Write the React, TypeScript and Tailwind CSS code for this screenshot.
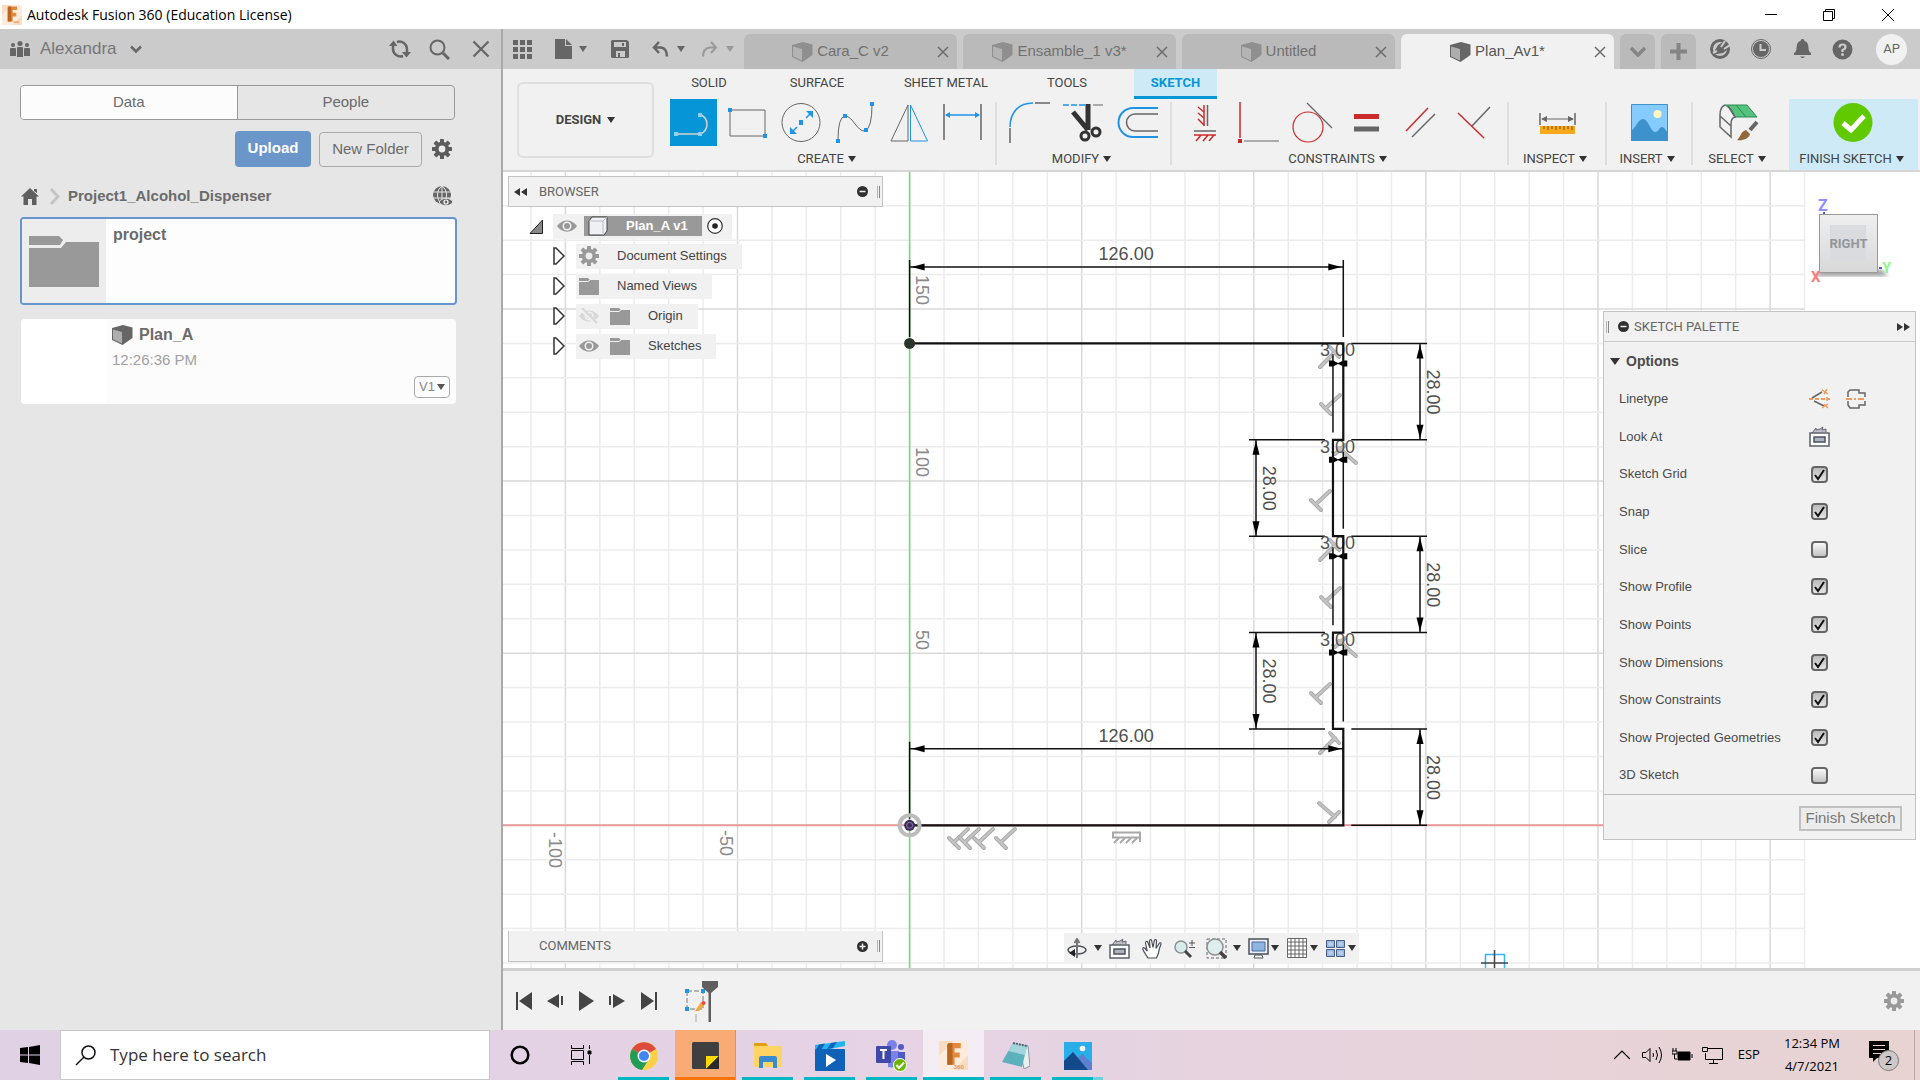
import React, { type ReactNode } from "react";

const sans = "font-['Liberation_Sans',sans-serif]";
const windows = "font-['Open_Sans',sans-serif]";

type IconProps = { className?: string };

/* ---------- shared icons ---------- */

function Caret({ className = "text-[#333]" }: IconProps) {
  return (
    <svg aria-hidden width="8" height="7" viewBox="0 0 8 7" className={className}>
      <path d="M0 0h8L4 6z" fill="currentColor" />
    </svg>
  );
}

function Cube({ className = "" }: IconProps) {
  return (
    <svg aria-hidden width="21" height="20" viewBox="0 0 21 20" className={className}>
      <path d="M0 3 11 0l9.500 2.500V13L10.500 20 0 15z" fill="#666" />
      <path d="M1 4.500 10 7v11.500L1 14.300z" fill="#aeaeae" />
    </svg>
  );
}

function Cross({ size = 12, className = "text-[#6c6c6c]" }: IconProps & { size?: number }) {
  return (
    <svg aria-hidden width={size} height={size} viewBox="0 0 12 12" className={className}>
      <path d="M1 1l10 10M11 1 1 11" stroke="currentColor" strokeWidth="1.500" />
    </svg>
  );
}

function Gear({ size = 20, className = "text-[#5c5c5c]" }: IconProps & { size?: number }) {
  return (
    <svg aria-hidden width={size} height={size} viewBox="0 0 20 20" className={className}>
      <g fill="currentColor">
        {[0, 45, 90, 135].map((a) => (
          <rect key={a} x="8" y="0" width="4" height="20" rx="0.500" transform={`rotate(${a} 10 10)`} />
        ))}
      </g>
      <circle cx="10" cy="10" r="5.200" fill="none" stroke="currentColor" strokeWidth="4" />
      <circle cx="10" cy="10" r="3.400" fill="#ececec" />
    </svg>
  );
}

function Eye({ off = false }: { off?: boolean }) {
  return (
    <svg aria-hidden width="20" height="16" viewBox="0 0 20 16" className={off ? "text-[#d8d8d8]" : "text-[#999]"}>
      <path d="M0 8C5 .500 15 .500 20 8 15 15.500 5 15.500 0 8z" fill="currentColor" />
      <circle cx="10" cy="8" r="4.500" fill="#f1f1f1" />
      <circle cx="10" cy="8" r="3" fill="currentColor" />
      {off && <path d="M2 1l15 14" stroke="#f1f1f1" strokeWidth="4" />}
      {off && <path d="M3 0l15 15" stroke="currentColor" strokeWidth="2" />}
    </svg>
  );
}

function SmallFolder() {
  return (
    <svg aria-hidden width="20" height="17" viewBox="0 0 20 17">
      <path d="M0 0h9l2 2h9v15H0z" fill="#999" />
      <path d="M0 3.500h9l2-1.500" stroke="#f1f1f1" fill="none" />
    </svg>
  );
}

function LookAt() {
  return (
    <svg aria-hidden width="21" height="21" viewBox="0 0 21 21">
      <path d="M3 7 7 2v2l4-1 3-2-1 3 4-1v3" fill="#b9bec6" stroke="#667" />
      <rect x="1" y="7" width="19" height="13" fill="#fff" stroke="#5a5f69" strokeWidth="1.500" />
      <rect x="5" y="11" width="11" height="5" fill="#aab4c2" stroke="#4b515c" strokeWidth="1.500" />
    </svg>
  );
}

function RoundSign({ plus = false }: { plus?: boolean }) {
  return (
    <svg aria-hidden width="11" height="11" viewBox="0 0 11 11">
      <circle cx="5.500" cy="5.500" r="5.500" fill="#2f2f2f" />
      <path d={plus ? "M2.500 5.500h6M5.500 2.500v6" : "M2.500 5.500h6"} stroke="#f1f1f1" strokeWidth="1.500" />
    </svg>
  );
}

function Grip() {
  return <span aria-hidden className="h-3 w-[3px] border-r border-l border-r-[#888] border-l-[#b5b5b5]" />;
}

/* ---------- title bar ---------- */

function FusionLogo({ size = 20, label = false }: { size?: number; label?: boolean }) {
  return (
    <svg aria-hidden width={size} height={size} viewBox="0 0 28 28">
      <rect width="28" height="28" fill="#fbdcc0" />
      <path d="M0 14 14 0h14v14L14 28H0z" fill="#fdebdb" />
      <path d="M8 4c0-1 1-2 2-2h11v5h-6v4h5v5h-5v7H8z" fill="#e08a3e" />
      <path d="M8 4c0-1 1-2 2-2h3v21H8z" fill="#b8651f" />
      {label ? (
        <text x="14" y="27" fontSize="6" fontWeight="700" fill="#e09a66" fontFamily="Liberation Sans">360</text>
      ) : (
        <rect x="16" y="23" width="8" height="2" fill="#eda76c" />
      )}
    </svg>
  );
}

function TitleBar() {
  return (
    <header className={`flex h-[29px] shrink-0 items-center bg-white pl-[2px] ${windows}`}>
      <FusionLogo />
      <h1 className="ml-[5px] flex-1 text-sm text-black">Autodesk Fusion 360 (Education License)</h1>
      <div className="flex h-full pr-[2px]">
        <button aria-label="Minimize" className="grid w-[58px] place-items-center">
          <svg width="12" height="12"><path d="M0 5.500h12" stroke="#000" /></svg>
        </button>
        <button aria-label="Restore" className="grid w-[58px] place-items-center">
          <svg width="12" height="12" fill="none" stroke="#000"><path d="M.500 2.500h9v9h-9zM2.500 2.500v-2h9v9h-2" /></svg>
        </button>
        <button aria-label="Close" className="grid w-[60px] place-items-center">
          <svg width="12" height="12"><path d="M0 0l12 12M12 0 0 12" stroke="#000" /></svg>
        </button>
      </div>
    </header>
  );
}

/* ---------- data panel ---------- */

function DataPanel() {
  return (
    <aside className="flex w-[503px] shrink-0 flex-col border-r-2 border-[#aaa] bg-[#e6e6e6] text-[15px] text-[#6b6b6b]">
      <div className="flex h-10 items-center bg-[#cbcbcb] pr-[11px] pl-[10px]">
        <svg aria-hidden width="20" height="16" viewBox="0 0 20 16" fill="#666">
          <circle cx="3" cy="4" r="2" /><circle cx="10" cy="2.500" r="2.500" /><circle cx="17" cy="4" r="2" />
          <path d="M0 8q0-1 1-1h4q1 0 1 1v7H0zM7 7q0-1 1-1h4q1 0 1 1v9H7zM14 8q0-1 1-1h4q1 0 1 1v7h-6z" />
        </svg>
        <button className="ml-[10px] flex items-center gap-[13px] text-[17px] text-[#777]">
          Alexandra
          <svg aria-hidden width="12" height="9" fill="none" stroke="#666" strokeWidth="2.500"><path d="M1 1.500l5 5 5-5" /></svg>
        </button>
        <div className="ml-auto flex items-center gap-[18px]">
          <button aria-label="Refresh">
            <svg width="22" height="20" viewBox="0 0 22 20" fill="none" stroke="#666" strokeWidth="2.500">
              <path d="M4 6v4a7.500 7.500 0 0 0 10 7M8 3a7.500 7.500 0 0 1 10 7v4" />
              <path d="M0 7 4.500 1.500 8.500 7zM13 13h9l-4.500 5.500z" fill="#666" stroke="none" />
            </svg>
          </button>
          <button aria-label="Search">
            <svg width="21" height="21" viewBox="0 0 21 21" fill="none" stroke="#666">
              <circle cx="8.500" cy="8.500" r="7" strokeWidth="2" /><path d="M14 14l6 6" strokeWidth="3" />
            </svg>
          </button>
          <button aria-label="Close panel" className="ml-1"><Cross size={18} className="text-[#666]" /></button>
        </div>
      </div>

      <div className="mt-4 mr-[46px] ml-5 grid h-[35px] grid-cols-2 overflow-hidden rounded border border-[#999]">
        <button className="border-r border-[#999] bg-[#fcfcfc]">Data</button>
        <button>People</button>
      </div>

      <div className="mt-[11px] mr-[49px] flex h-9 items-center justify-end gap-2">
        <button className="h-9 w-[76px] rounded bg-[#6a96c9] pb-px font-bold text-white">Upload</button>
        <button className="h-[35px] w-[103px] rounded border border-[#aaa]">New Folder</button>
        <button aria-label="Settings" className="ml-[2px]"><Gear /></button>
      </div>

      <nav className="mt-[17px] mr-12 ml-[21px] flex h-6 items-center">
        <a href="#home" aria-label="Home">
          <svg width="18" height="17" viewBox="0 0 18 17" fill="#5f5f5f">
            <path d="M9 0 18 8.500h-2.500V17H11v-6H7v6H2.500V8.500H0zM13 1h3v4l-3-2z" />
          </svg>
        </a>
        <svg aria-hidden className="ml-[10px]" width="11" height="17" fill="none" stroke="#c4c4c4" strokeWidth="3"><path d="M2 1l7 7.500L2 16" /></svg>
        <a href="#project1" className="ml-2 font-bold">Project1_Alcohol_Dispenser</a>
        <button aria-label="Public link" className="ml-auto">
          <svg width="21" height="20" viewBox="0 0 21 20" fill="none">
            <circle cx="10" cy="9" r="9" fill="#666" />
            <path d="M1 6h18M1 12h18M10 0v18M10 0C4 4 4 14 10 18M10 0c6 4 6 14 0 18" stroke="#e6e6e6" />
            <path d="M7 16c3-5 11-5 14 0-3 5-11 5-14 0z" fill="#666" stroke="#e6e6e6" />
            <circle cx="14" cy="16" r="2" stroke="#fff" strokeWidth="1.200" />
          </svg>
        </button>
      </nav>

      <div className="mt-[9px] mr-11 ml-5 flex h-[88px] overflow-hidden rounded border-2 border-[#6795cf] bg-[#fdfdfd]">
        <div className="grid w-[84px] place-items-center bg-[#ededed]">
          <svg aria-hidden width="70" height="52" viewBox="0 0 70 52" fill="#999">
            <path d="M0 1h30l4 4-3 5H0zM0 13h32l5-6h33v45H0z" />
          </svg>
        </div>
        <h2 className="mt-1 ml-[7px] text-base font-bold">project</h2>
      </div>

      <div className="mt-[14px] mr-[45px] ml-[21px] flex h-[85px] rounded bg-[#fcfcfc]">
        <div className="w-[85px] rounded-l bg-white" />
        <div className="mt-1 ml-[6px] flex-1">
          <h2 className="flex items-center gap-[6px] text-base font-bold"><Cube />Plan_A</h2>
          <p className="mt-[2px] text-[#a0a0a0]">12:26:36 PM</p>
        </div>
        <button className="mr-[6px] mb-[6px] flex h-[22px] w-9 items-center justify-center gap-[2px] self-end rounded-sm border border-[#aaa] text-[13px] text-[#888]">
          V1 <Caret className="text-[#555]" />
        </button>
      </div>
    </aside>
  );
}

/* ---------- document tabs ---------- */

const tabs = [
  { name: "Cara_C v2", active: false },
  { name: "Ensamble_1 v3*", active: false },
  { name: "Untitled", active: false },
  { name: "Plan_Av1*", active: true },
];

function TabBar() {
  return (
    <div className="flex h-10 shrink-0 items-center bg-[#cbcbcb] pr-[13px]">
      <div className="flex w-[241px] shrink-0 items-center pl-[10px]">
        <button aria-label="Data panel">
          <svg width="19" height="19" fill="#666">
            {[0, 7, 14].map((y) => [0, 7, 14].map((x) => <rect key={`${x}-${y}`} x={x} y={y} width="5" height="5" />))}
          </svg>
        </button>
        <button aria-label="File" className="ml-[23px] flex items-center gap-[7px]">
          <svg width="17" height="20" fill="#666"><path d="M0 0h10v7h7v13H0zM11 0l6 6h-6z" /></svg>
          <Caret className="text-[#666]" />
        </button>
        <button aria-label="Save" className="ml-6">
          <svg width="18" height="18" viewBox="0 0 18 18"><path d="M0 1l1-1h15l2 2v15l-1 1H1l-1-1z" fill="#666" /><path d="M3 2h12v5H3zM5 11h9v6H5z" fill="#cbcbcb" /><path d="M11 3h2v3h-2zM7 13h2v4H7z" fill="#666" /></svg>
        </button>
        <button aria-label="Undo" className="ml-[23px] flex items-center gap-2">
          <svg width="17" height="17" fill="none" stroke="#666" strokeWidth="2.500"><path d="M7 1 2 6.500 7 12M2 6.500h7q6 1 6 9" /></svg>
          <Caret className="text-[#666]" />
        </button>
        <button aria-label="Redo" className="ml-4 flex items-center gap-2">
          <svg width="17" height="17" fill="none" stroke="#999" strokeWidth="2"><path d="M10 1l5 5.500-5 5.500M15 6.500H9q-7 1-7 9" /></svg>
          <Caret className="text-[#999]" />
        </button>
      </div>
      <div className="flex flex-1 gap-[6px] self-end">
        {tabs.map((t) => (
          <div
            key={t.name}
            className={`flex h-[35px] flex-1 items-center rounded-t-md pr-2 ${t.active ? "bg-[#f1f1f1] text-[#555]" : "bg-[#bababa] text-[#717171]"}`}
          >
            <button className="flex flex-1 items-center justify-center gap-1 text-[15px]">
              <Cube className={t.active ? "" : "opacity-50"} />
              {t.name}
            </button>
            <button aria-label={`Close ${t.name}`}><Cross /></button>
          </div>
        ))}
        <button aria-label="All tabs" className="grid h-[35px] w-[35px] place-items-center rounded-t-md bg-[#bababa]">
          <svg width="16" height="11" fill="none" stroke="#858585" strokeWidth="3.500"><path d="M1 2l7 7 7-7" /></svg>
        </button>
        <button aria-label="New tab" className="grid h-[35px] w-[35px] place-items-center rounded-t-md bg-[#bababa]">
          <svg width="17" height="17" stroke="#858585" strokeWidth="4"><path d="M0 8.500h17M8.500 0v17" /></svg>
        </button>
      </div>
      <div className="ml-[14px] flex items-center gap-[21px]">
        <button aria-label="Extensions">
          <svg width="20" height="20" viewBox="0 0 20 20">
            <circle cx="10" cy="10" r="8.500" fill="none" stroke="#666" strokeWidth="3" />
            <path d="M3 15 8 6l5-3 3 3 1 5-4 3-6 1z" fill="#666" />
            <path d="M11 8l4-6M14 10l6-4M3 14l4-2" stroke="#cbcbcb" strokeWidth="2" />
          </svg>
        </button>
        <button aria-label="Job status">
          <svg width="20" height="20" viewBox="0 0 20 20"><circle cx="10" cy="10" r="9.500" fill="none" stroke="#666" /><circle cx="10" cy="10" r="8" fill="#666" /><path d="M9.500 5v6H15" fill="none" stroke="#cbcbcb" strokeWidth="2" /></svg>
        </button>
        <button aria-label="Notifications" className="ml-[2px]">
          <svg width="17" height="20" viewBox="0 0 17 20" fill="#666"><path d="M8.500 0q2 0 2 2 4 1 4 7 0 4 2.500 5v2H0v-2q2.500-1 2.500-5 0-6 4-7 0-2 2-2zM6 17.500h5q-2.500 3-5 0z" /></svg>
        </button>
        <button aria-label="Help" className="mr-[3px]">
          <svg width="21" height="21" viewBox="0 0 21 21"><circle cx="10.500" cy="10.500" r="10" fill="#666" /><path d="M7.500 8.500q0-3 3-3t3 2.500q0 2-3 3v2" fill="none" stroke="#cbcbcb" strokeWidth="2.200" /><circle cx="10.500" cy="15.500" r="1.500" fill="#cbcbcb" /></svg>
        </button>
        <button className="-ml-px size-[31px] rounded-full bg-[#f1f1f1] font-['Roboto',sans-serif] text-[13px] text-[#666]">AP</button>
      </div>
    </div>
  );
}

/* ---------- ribbon ---------- */

const B = "#1f93e6";
const G = "#666";
const R = "#cc2b2b";

function Ico({ children }: { children: ReactNode }) {
  return <svg aria-hidden width="41" height="41" viewBox="0 0 41 41" fill="none">{children}</svg>;
}

const createTools: [string, ReactNode][] = [
  ["Line", <Ico><path d="M3 32h24a9 10 0 0 0 0-19.500h-1" stroke="#d9d2c9" strokeWidth="1.500" /><path d="M1 30h4v4H1zM25 30h4v4h-4zM25 11h4v4h-4z" fill="#8fd0fb" /></Ico>],
  ["Rectangle", <Ico><path d="M3 8h35v26H3z" stroke={G} /><path d="M1 6h4v4H1zM36 32h4v4h-4z" fill={B} /></Ico>],
  ["Circle", <Ico><circle cx="20" cy="20.500" r="19" stroke={G} /><path d="M18 18h4v5h-4zM32 9v7l-7-7zM9 32v-7l7 7z" fill={B} /><path d="M25 16l5-5M16 25l-5 5" stroke={B} strokeWidth="1.500" /></Ico>],
  ["Spline", <Ico><path d="M3 38Q3 15 10 14c8 0 12 16 20 15q7-3 7-26" stroke={G} /><path d="M1 37h4v4H1zM8 12h4v4H8zM29 26h4v4h-4zM35 0h4v4h-4z" fill={B} /></Ico>],
  ["Mirror", <Ico><path d="M19 3v36H2z" stroke={G} /><path d="M21.500 3v36h17z" stroke={B} /></Ico>],
  ["Dimension", <Ico><path d="M1 2v36M38 2v36" stroke={G} strokeWidth="1.500" /><path d="M3 13h33" stroke={B} strokeWidth="1.500" /><path d="M2 13l5-3v6zM37 13l-5-3v6z" fill={B} /></Ico>],
];

const modifyTools: [string, ReactNode][] = [
  ["Fillet", <Ico><path d="M1 25C1 10 10 1 24 1" stroke={B} strokeWidth="1.500" /><path d="M1 26v15M26 1h15" stroke={G} strokeWidth="1.500" /></Ico>],
  ["Trim", <Ico><path d="M0 3h22" stroke={B} strokeWidth="1.500" strokeDasharray="6 2" /><path d="M30 3h10" stroke={G} /><path d="M10 10l15 18M25 2v26" stroke="#333" strokeWidth="5" /><circle cx="22" cy="34" r="4" stroke="#333" strokeWidth="3" /><circle cx="33" cy="30" r="4" stroke="#333" strokeWidth="3" /></Ico>],
  ["Offset", <Ico><path d="M41 6H16a14 14 0 0 0 0 29h25" stroke={B} strokeWidth="2" /><path d="M41 12H18a8 8 0 0 0 0 17h23" stroke={G} strokeWidth="1.500" /></Ico>],
];

const constraintTools: [string, ReactNode][] = [
  ["Horizontal/Vertical", <Ico><path d="M20 3v21" stroke={R} strokeWidth="1.500" /><path d="M23.500 3v21M10 29h22" stroke={G} strokeWidth="1.500" /><path d="M14 5l6 5M14 11l6 5M14 17l6 6M10 33h22M17 33l-5 6M24 33l-5 6M30 33l-5 6" stroke={R} strokeWidth="1.500" /></Ico>],
  ["Coincident", <Ico><path d="M2 0v36" stroke={R} strokeWidth="1.500" /><path d="M6 39h35" stroke={G} /><path d="M0 37h4v4H0z" fill={R} /></Ico>],
  ["Tangent", <Ico><circle cx="16" cy="25" r="15" stroke={R} strokeWidth="1.200" /><path d="M15 1l25 25" stroke={G} strokeWidth="1.200" /></Ico>],
  ["Equal", <Ico><path d="M8 14.500h25" stroke={R} strokeWidth="5" /><path d="M8 27h25" stroke={G} strokeWidth="5" /></Ico>],
  ["Parallel", <Ico><path d="M6 29 28 6" stroke={R} strokeWidth="1.500" /><path d="M12 35l23-23" stroke={G} strokeWidth="1.500" /></Ico>],
  ["Perpendicular", <Ico><path d="M4 11l26 25" stroke={R} strokeWidth="1.500" /><path d="M18 24 36 5" stroke={G} strokeWidth="1.500" /></Ico>],
];

function GroupLabel({ children }: { children: string }) {
  return (
    <button className="mt-1 mr-1 flex h-[18px] items-center gap-1 whitespace-nowrap">
      {children} <Caret />
    </button>
  );
}

function ToolGroup({ label, tools, className }: { label: string; tools: [string, ReactNode][]; className: string }) {
  return (
    <section className={`flex shrink-0 flex-col items-center ${className}`}>
      <div className="flex gap-[7px]">
        {tools.map(([name, icon]) => (
          <button
            key={name}
            aria-label={name}
            className={`grid h-[47px] w-[47px] place-items-center ${name === "Line" ? "bg-[#0696d7]" : ""}`}
          >
            {icon}
          </button>
        ))}
      </div>
      <GroupLabel>{label}</GroupLabel>
    </section>
  );
}

function SingleGroup({ label, icon, className }: { label: string; icon: ReactNode; className: string }) {
  return (
    <section className={`flex shrink-0 flex-col items-center ${className}`}>
      <button aria-label={label} className="grid h-[47px] w-12 place-items-center">{icon}</button>
      <GroupLabel>{label}</GroupLabel>
    </section>
  );
}

function Divider() {
  return <span aria-hidden className="mt-[3px] h-[63px] w-0.5 shrink-0 bg-[#ddd]" />;
}

function Ribbon() {
  return (
    <div className="flex h-[103px] shrink-0 overflow-hidden border-b-2 border-[#d6d6d6] bg-[#f1f1f1] font-['Roboto',sans-serif] text-[13px] text-[#444]">
      <div className="shrink-0 py-[13px] pl-[14px]">
        <button className="flex h-[76px] w-[137px] items-center justify-center gap-[6px] rounded-md border-2 border-[#dedede] font-bold">
          DESIGN <Caret />
        </button>
      </div>
      <div className="flex flex-1 flex-col">
        <div role="tablist" className="flex h-[30px] shrink-0 items-stretch pl-4">
          <button role="tab" className="w-[78px] pb-[2px]">SOLID</button>
          <button role="tab" className="w-[138px] pb-[2px]">SURFACE</button>
          <button role="tab" className="w-[120px] pb-[2px]">SHEET METAL</button>
          <button role="tab" className="w-[122px] pb-[2px]">TOOLS</button>
          <button role="tab" aria-selected className="ml-[6px] w-[83px] border-b-[3px] border-[#0696d7] bg-[#cdeaf6] pt-px font-bold text-[#0696d7]">SKETCH</button>
        </div>
        <div className="flex flex-1">
          <ToolGroup label="CREATE" tools={createTools} className="pr-2 pl-4" />
          <Divider />
          <ToolGroup label="MODIFY" tools={modifyTools} className="px-[9px]" />
          <Divider />
          <ToolGroup label="CONSTRAINTS" tools={constraintTools} className="px-[9px]" />
          <Divider />
          <SingleGroup
            label="INSPECT"
            className="w-24"
            icon={
              <Ico>
                <path d="M3 11v12M38 11v12" stroke={G} strokeWidth="1.500" /><path d="M5 17h31" stroke={G} /><path d="M4 17l6-3v6zM37 17l-6-3v6z" fill={G} />
                <path d="M3 24h35v8H3z" fill="#f7a81b" /><path d="M7 24v3M11 24v4M15 24v3M19 24v4M23 24v3M27 24v4M31 24v3M35 24v4" stroke="#7a5200" />
              </Ico>
            }
          />
          <Divider />
          <SingleGroup
            label="INSERT"
            className="w-[84px]"
            icon={
              <Ico>
                <path d="M2 2h37v37H2z" fill="#86cbff" /><circle cx="28.500" cy="12" r="4" fill="#fdf6c4" />
                <path d="M2 29c5-3 7-12 12-12s8 13 12 13 4-5 7-5 3 4 6 5v9H2z" fill="#3e92cc" /><path d="M2.500 2.500h36v36h-36z" stroke="#3e92cc" />
              </Ico>
            }
          />
          <Divider />
          <SingleGroup
            label="SELECT"
            className="mr-1 w-[92px]"
            icon={
              <Ico>
                <path d="M6 3h22l10 12H16L13 8z" fill="#55c27d" stroke="#2d8a52" /><path d="M17 3l10 12" stroke="#2d8a52" />
                <path d="M6 3Q1 5 1 13v12l11 10V22q0-6 4-7L9 4M1 14l11 10" stroke={G} strokeWidth="1.500" />
                <path d="M38 20 31 28" stroke={G} strokeWidth="4" /><path d="M18 38c3-2 4-9 9-10l4 4c-1 5-8 7-13 6z" fill="#94683a" />
              </Ico>
            }
          />
          <SingleGroup
            label="FINISH SKETCH"
            className="mr-[2px] min-w-[129px] flex-1 bg-[#cdeaf6]"
            icon={
              <Ico>
                <circle cx="20" cy="20.500" r="19.500" fill="#61c900" /><path d="M10 21l8 7 13-14" stroke="#fff" strokeWidth="5" />
              </Ico>
            }
          />
        </div>
      </div>
    </div>
  );
}

/* ---------- sketch drawing ---------- */

const OX = 909.6;
const OY = 825.3;
const U = 3.442;
const X1 = OX + 126 * U;
const X0 = OX + 123 * U;
const level = (n: number) => OY - n * 28 * U;

const mark = {
  downLeft: "M0 0-14 13M-19 9l10 10",
  upRight: "M0 0l15-15M10-20l9 10",
  upLeft: "M0 0l-17-15M-21-9l10-9",
  downRight: "M0 0l16 14M10 19l10-10",
};

function Mark({ kind, x, y }: { kind: keyof typeof mark; x: number; y: number }) {
  return (
    <g transform={`translate(${x} ${y})`} strokeLinecap="round" fill="none">
      <path d={mark[kind]} stroke="#aaa" strokeWidth="4" />
      <path d={mark[kind]} stroke="#c4c4c4" strokeWidth="2" />
    </g>
  );
}

function Horizontal({ y }: { y: number }) {
  return (
    <g stroke="#111" strokeWidth="1.500" fill="none">
      <path d={`M${OX} ${y}H${X1}M${OX} ${y - 7}v77M${X1} ${y - 7}v77`} />
      <path d={`M${OX + 2} ${y}l13-3.500v7zM${X1 - 2} ${y}l-13-3.500v7z`} fill="#000" stroke="none" />
      <text x={OX + 189} y={y - 7} fill="#4f4f4f" stroke="none">126.00</text>
    </g>
  );
}

function Vertical({ x, n, side }: { x: number; n: number; side: "left" | "right" }) {
  const a = level(n);
  const b = level(n - 1);
  const ends = side === "right" ? [X1 + 8, x + 7] : [x - 7, X0 - 8];
  return (
    <g stroke="#111" strokeWidth="1.500" fill="none">
      <path d={`M${x} ${a}V${b}M${ends[0]} ${a}H${ends[1]}M${ends[0]} ${b}H${ends[1]}`} />
      <path d={`M${x} ${a + 1}l-3.500 14h7zM${x} ${b - 1}l-3.500-14h7z`} fill="#000" stroke="none" />
      <text transform={`translate(${x + 7} ${a + 26}) rotate(90)`} fill="#4f4f4f" stroke="none">28.00</text>
    </g>
  );
}

function Drawing() {
  const grid: ReactNode[] = [];
  for (let i = -11; i <= 26; i++) {
    const x = OX + i * 10 * U;
    grid.push(<path key={`v${i}`} d={`M${x} 172V970`} stroke={i % 5 ? "#ececec" : "#d9d9d9"} strokeWidth={1.5} />);
  }
  for (let j = -4; j <= 18; j++) {
    const y = OY - j * 10 * U;
    grid.push(<path key={`h${j}`} d={`M503 ${y}H${OX + 260 * U}`} stroke={j % 5 ? "#ececec" : "#d9d9d9"} strokeWidth={1.5} />);
  }
  return (
    <svg aria-label="Sketch" className={`absolute inset-0 h-full w-full ${sans}`} fontSize="18">
      <g transform="translate(-503 -172)">
        {grid}
        <path d={`M503 ${OY}H${OX + 260 * U}`} stroke="#e99a9a" strokeWidth="2" />
        <path d={`M${OX} 172V970`} stroke="#6fe06f" strokeWidth="1.500" />
        <g fill="#8a8a8a">
          <text transform="translate(916 275) rotate(90)">150</text>
          <text transform="translate(916 447) rotate(90)">100</text>
          <text transform="translate(916 630) rotate(90)">50</text>
          <text transform="translate(549 832) rotate(90)">-100</text>
          <text transform="translate(720 830) rotate(90)">-50</text>
        </g>
        <Mark kind="upRight" x={1320} y={367} />
        <Mark kind="upRight" x={1320} y={560} />
        <Mark kind="upRight" x={1320} y={753} />
        <Mark kind="upLeft" x={1356} y={463} />
        <Mark kind="upLeft" x={1356} y={656} />
        <Mark kind="downRight" x={1319} y={803} />
        <Mark kind="downLeft" x={1340} y={395} />
        <Mark kind="downLeft" x={1330} y={491} />
        <Mark kind="downLeft" x={1340} y={588} />
        <Mark kind="downLeft" x={1330} y={684} />
        {[968, 979, 993, 1015].map((x) => <Mark key={x} kind="downLeft" x={x} y={829} />)}
        <g stroke="#a8a8a8" fill="none">
          <path d="M1113 832.500h27v5h-27z" strokeWidth="2" />
          <path d="M1119 838l-5 5M1125 838l-5 5M1131 838l-5 5M1137 838l-5 5M1140 838v4" strokeWidth="2" />
        </g>
        <Horizontal y={267} />
        <Horizontal y={748.7} />
        <Vertical x={1420} n={5} side="right" />
        <Vertical x={1420} n={3} side="right" />
        <Vertical x={1420} n={1} side="right" />
        <Vertical x={1256} n={4} side="left" />
        <Vertical x={1256} n={2} side="left" />
        {[5, 4, 3, 2].map((n) => {
          const y = level(n);
          return (
            <g key={n}>
              <path d={`M${n % 2 ? X0 : X1} ${y + 12}v77M${X0} ${y + 20}H${X1}`} stroke="#111" strokeWidth="1.500" />
              <path d={`M${X0 - 4} ${y + 17}v6h4l4-2v-2l-4-2zM${X1 + 4} ${y + 17}v6h-4l-4-2v-2l4-2z`} fill="#000" />
              <text x="1320" y={y + 13} fill="#555">3.00</text>
            </g>
          );
        })}
        <path
          d={`M${OX} ${level(5)}H${X1}V${level(4)}H${X0}V${level(3)}H${X1}V${level(2)}H${X0}V${level(1)}H${X1}V${OY}H${OX}`}
          fill="none" stroke="#111" strokeWidth="2.200"
        />
        <circle cx={OX} cy={level(5)} r="5.500" fill="#2b352b" />
        <circle cx={OX} cy={OY} r="10" fill="none" stroke="#bcbcbc" strokeWidth="4" />
        <circle cx={OX} cy={OY} r="5.500" fill="#3d2d55" />
        <circle cx={OX} cy={OY} r="3" fill="none" stroke="#8e75bb" />
        <path d="M1485.500 972v-17.500h19V972" fill="none" stroke="#35b5f5" strokeWidth="1.500" />
        <path d="M1481 963h27M1494.500 950v22" stroke="#444" strokeWidth="1.500" />
      </g>
    </svg>
  );
}

/* ---------- browser ---------- */

type Node = { name: string; eye?: "on" | "off"; icon: "gear" | "folder" };
const nodes: Node[] = [
  { name: "Document Settings", icon: "gear" },
  { name: "Named Views", icon: "folder" },
  { name: "Origin", icon: "folder", eye: "off" },
  { name: "Sketches", icon: "folder", eye: "on" },
];

function Browser() {
  return (
    <section className="absolute top-1 left-[5px] w-[375px] text-[13px] text-[#444]">
      <div className="flex h-[31px] items-center border border-[#c4c4c4] bg-[#f1f1f1] pr-[2px] pl-[5px] font-['Roboto',sans-serif] text-[#666]">
        <button aria-label="Collapse browser">
          <svg width="13" height="8" fill="#333"><path d="M6 0v8L0 4zM13 0v8L7 4z" /></svg>
        </button>
        <h2 className="ml-[12px] flex-1">BROWSER</h2>
        <button aria-label="Hide browser" className="mr-[9px]"><RoundSign /></button>
        <Grip />
      </div>
      <ul className="mt-1">
        <li className="flex h-[30px] items-center pl-[21px]">
          <svg aria-hidden width="14" height="15"><path d="M13.500 1v13.500H1z" fill="#888" stroke="#222" /></svg>
          <div className="ml-[10px] flex h-[25px] items-center bg-[#f1f1f1] pr-[9px] pl-1">
            <Eye />
            <button className="ml-[7px] flex h-5 w-[118px] items-center gap-[18px] bg-[#999] pl-1 font-bold text-white">
              <svg aria-hidden width="20" height="20" viewBox="0 0 20 20"><path d="M1 5l3-4h15v14l-3 4H1z" fill="#eef0f4" stroke="#444" /><path d="M1 5h14v14M15 5l4-4" stroke="#b9bcc5" fill="none" /></svg>
              <span>Plan_A v1</span>
            </button>
            <svg aria-label="Active component" className="ml-[5px]" width="16" height="16"><circle cx="8" cy="8" r="7.300" fill="#fff" stroke="#333" strokeWidth="1.200" /><circle cx="8" cy="8" r="2.800" fill="#222" /></svg>
          </div>
        </li>
        {nodes.map((n) => (
          <li key={n.name} className="flex h-[30px] items-center pl-[45px]">
            <button aria-label={`Expand ${n.name}`}>
              <svg width="12" height="18"><path d="M1 1l2 0 8 8-8 8H1z" fill="#fff" stroke="#333" strokeWidth="1.500" /></svg>
            </button>
            <div className="ml-[11px] flex h-[25px] items-center bg-[#f1f1f1] pr-[15px] pl-[3px]">
              {n.eye && <span className="mr-[11px]"><Eye off={n.eye === "off"} /></span>}
              {n.icon === "gear" ? <Gear className="text-[#999]" /> : <SmallFolder />}
              <span className="ml-[18px]">{n.name}</span>
            </div>
          </li>
        ))}
      </ul>
    </section>
  );
}

function ViewCube() {
  return (
    <div className="absolute top-6 right-6 h-[92px] w-[90px]">
      <svg aria-label="View cube" width="90" height="92" viewBox="0 0 90 92" fontFamily="Roboto" fontWeight="700">
        <defs>
          <linearGradient id="face" x1="0" y1="0" x2="0" y2="1"><stop offset="0" stopColor="#efefef" /><stop offset="1" stopColor="#d8d8d8" /></linearGradient>
          <filter id="soft"><feGaussianBlur stdDeviation="2" /></filter>
        </defs>
        <path d="M8 80l8-6h60l6 6z" fill="#999" filter="url(#soft)" />
        <rect x="13.500" y="18.500" width="58" height="58" fill="url(#face)" stroke="#999" />
        <rect x="24" y="29" width="36" height="37" fill="#d9dbde" />
        <text x="42.500" y="52" fontSize="13" textAnchor="middle" fill="#92969b">RIGHT</text>
        <text x="12" y="15" fontSize="16" fill="#8f8fff">Z</text>
        <text x="5" y="86" fontSize="15" fill="#f37d7d">X</text>
        <text x="76" y="77" fontSize="15" fill="#8df58d">Y</text>
        <path d="M18 16v2M73 72h3" stroke="#55d" strokeWidth="2" />
      </svg>
    </div>
  );
}

/* ---------- sketch palette ---------- */

const options = [
  ["Sketch Grid", true],
  ["Snap", true],
  ["Slice", false],
  ["Show Profile", true],
  ["Show Points", true],
  ["Show Dimensions", true],
  ["Show Constraints", true],
  ["Show Projected Geometries", true],
  ["3D Sketch", false],
] as const;

function Palette() {
  return (
    <section className="absolute top-[139px] right-1 w-[313px] border border-[#c4c4c4] bg-[#f1f1f1] text-[13px] text-[#4b4b4b]">
      <div className="flex h-[30px] items-center border-b border-[#c8c8c8] pr-[5px] pl-[2px] font-['Roboto',sans-serif] text-[#666]">
        <Grip />
        <button aria-label="Hide palette" className="ml-[9px]"><RoundSign /></button>
        <h2 className="ml-[5px] flex-1">SKETCH PALETTE</h2>
        <button aria-label="Collapse palette">
          <svg width="13" height="8" fill="#333"><path d="M0 0l6 4-6 4zM7 0l6 4-6 4z" /></svg>
        </button>
      </div>
      <button className="mt-[9px] flex h-5 items-center gap-[6px] pl-[6px] text-sm font-bold">
        <svg aria-hidden width="10" height="7" fill="#333"><path d="M0 0h10L5 7z" /></svg>
        Options
      </button>
      <div className="mt-[9px] grid h-[414px] auto-rows-fr items-center pl-[15px]">
        <div className="flex items-center">
          <span className="w-[190px]">Linetype</span>
          <button aria-label="Construction">
            <svg width="21" height="20" viewBox="0 0 21 20" fill="none"><path d="M13 3 3 9M5 12l10 5" stroke={G} strokeWidth="1.500" /><path d="M0 10h21" stroke="#ee7d33" strokeWidth="1.500" strokeDasharray="4 2" /><path d="M13 1l6 4M18 0l-3 5M18 8v4M13 19l6-4M15 15l4 4" stroke="#ee9a60" strokeWidth="1.500" /></svg>
          </button>
          <button aria-label="Centerline" className="ml-4">
            <svg width="20" height="20" viewBox="0 0 20 20" fill="none"><path d="M2 8V3l2-2h9v3h6v4M2 12v4l2 3h9v-3h6v-4" stroke={G} strokeWidth="1.500" /><path d="M0 10h20" stroke="#ee7d33" strokeWidth="1.500" strokeDasharray="6 2 2 2" /></svg>
          </button>
        </div>
        <div className="flex items-center">
          <span className="w-[190px]">Look At</span>
          <button aria-label="Look At"><LookAt /></button>
        </div>
        {options.map(([name, on]) => (
          <label key={name} className="flex items-center">
            <span className="w-48">{name}</span>
            <span className="grid">
              <input
                type="checkbox"
                defaultChecked={on}
                className="peer col-start-1 row-start-1 size-[17px] appearance-none rounded border-2 border-[#666] bg-linear-to-b from-[#f8f8f8] to-[#c4c4c4] checked:from-[#bbb] checked:to-[#e4e4e4]"
              />
              <svg aria-hidden width="17" height="17" className="pointer-events-none invisible col-start-1 row-start-1 peer-checked:visible" fill="none" stroke="#111" strokeWidth="2"><path d="M4 9l3 4 6-9" /></svg>
            </span>
          </label>
        ))}
      </div>
      <div className="flex h-[45px] items-center justify-end border-t border-[#bbb] pt-[2px] pr-[13px]">
        <button className="h-[25px] w-[103px] border-2 border-[#c0c0c0] bg-[#ececec] text-[15px] leading-5 whitespace-nowrap text-[#777]">Finish Sketch</button>
      </div>
    </section>
  );
}

function Comments() {
  return (
    <section className="absolute bottom-[6px] left-[5px] flex h-[31px] w-[375px] items-center border border-t-0 border-[#c4c4c4] bg-[#f1f1f1] pr-[2px] pl-[30px] font-['Roboto',sans-serif] text-[13px] text-[#666]">
      <h2 className="flex-1">COMMENTS</h2>
      <button aria-label="Show comments" className="mr-[9px]"><RoundSign plus /></button>
      <Grip />
    </section>
  );
}

/* ---------- navigation bar ---------- */

function NavBar() {
  const dark = "#4a505a";
  return (
    <div className="absolute inset-x-0 bottom-[5px] flex justify-center">
      <div className="flex h-[30px] items-center bg-[#f1f1f1] px-[3px]">
        <button aria-label="Orbit" className="flex items-center gap-[7px]">
          <svg width="20" height="21" viewBox="0 0 20 21" fill="none"><ellipse cx="10" cy="12" rx="9" ry="4" stroke={dark} strokeWidth="1.500" /><path d="M10 2v18M7.500 5 10 1l2.500 4" stroke="#777" strokeWidth="2" /><path d="M2 15l6-4v8z" fill="#222" /></svg>
          <Caret />
        </button>
        <button aria-label="Look At" className="ml-[7px]"><LookAt /></button>
        <button aria-label="Pan" className="ml-3">
          <svg width="20" height="21" viewBox="0 0 20 21" fill="#fff" stroke={dark} strokeWidth="1.200"><path d="M6 20Q2 14 .700 11q0-2 2-1l2.500 3L3.500 5q0-2 2-1.500L8 10 7.500 3q.500-2 2-1L11 9.500 12.500 2q1.500-1 2 .500L14 10.500 17.500 5q2-.500 1.500 1-2 5-2.500 9l-2 5z" /></svg>
        </button>
        <button aria-label="Zoom" className="ml-3">
          <svg width="21" height="21" viewBox="0 0 21 21" fill="none"><circle cx="7" cy="9" r="6" fill="#d9ecec" stroke="#8a8f98" strokeWidth="1.500" /><path d="M11 13l6 6" stroke="#444" strokeWidth="3" /><path d="M15 5h6M18 2v6M15 9.500h6" stroke="#555" /></svg>
        </button>
        <button aria-label="Fit" className="ml-[11px] flex items-center gap-[6px]">
          <svg width="21" height="21" viewBox="0 0 21 21" fill="none"><path d="M1 1h19v19H1z" stroke="#666" strokeDasharray="3 2" /><circle cx="9" cy="9" r="8" fill="#dfeeed" stroke="#8a8f98" strokeWidth="1.500" /><path d="M14 14l6 6" stroke="#444" strokeWidth="3.500" /></svg>
          <Caret />
        </button>
        <button aria-label="Display settings" className="ml-[7px] flex items-center gap-[2px]">
          <svg width="21" height="21" viewBox="0 0 21 21"><path d="M1 1h19v15H1z" fill="#eef" stroke={dark} strokeWidth="1.500" /><path d="M4 4h13v9H4z" fill="#8fb4e0" stroke="#4b6b98" /><path d="M7 17h7l1 3H6z" fill="#fff" stroke={dark} /></svg>
          <Caret />
        </button>
        <button aria-label="Grid and snaps" className="ml-2 flex items-center gap-[3px]">
          <svg width="20" height="20" viewBox="0 0 20 20" fill="#fff" stroke="#666"><path d="M.500.500h19v19H.500zM4 0v20M8 0v20M12 0v20M16 0v20M0 4h20M0 8h20M0 12h20M0 16h20" /></svg>
          <Caret />
        </button>
        <button aria-label="Viewports" className="ml-2 flex items-center gap-[3px]">
          <svg width="19" height="17" viewBox="0 0 19 17" fill="#9db9e0" stroke="#4b6085"><path d="M.500.500h8v7h-8zM10.500.500h8v7h-8zM.500 9.500h8v7h-8zM10.500 9.500h8v7h-8z" /><path d="M3 3h3v2H3zM13 3h3v2h-3zM3 12h3v2H3zM13 12h3v2h-3z" stroke="#c9d9f0" /></svg>
          <Caret />
        </button>
      </div>
    </div>
  );
}

/* ---------- timeline ---------- */

function Timeline() {
  return (
    <footer className="flex h-[62px] shrink-0 items-center border-t-[3px] border-[#cfcfcf] bg-[#f1f1f1] pr-4 pl-[13px]">
      <div className="flex items-center gap-[15px] text-[#444]">
        <button aria-label="Go to start"><svg width="16" height="18" fill="currentColor"><path d="M0 0h2v18H0zM16 0v18L3 9z" /></svg></button>
        <button aria-label="Step back"><svg width="17" height="18" fill="currentColor"><path d="M12 2v14L0 9zM14 4h2v9h-2z" /></svg></button>
        <button aria-label="Play"><svg width="15" height="20" fill="currentColor"><path d="M0 0l15 10L0 20z" /></svg></button>
        <button aria-label="Step forward"><svg width="17" height="18" fill="currentColor"><path d="M4 2v14l12-7zM0 4h2v9H0z" /></svg></button>
        <button aria-label="Go to end"><svg width="16" height="18" fill="currentColor"><path d="M14 0h2v18h-2zM0 0v18l13-9z" /></svg></button>
      </div>
      <button aria-label="Sketch feature" className="ml-7">
        <svg width="34" height="42" viewBox="0 0 34 42" fill="none">
          <path d="M2 11h16v18H2z" stroke="#777" strokeDasharray="5 2" />
          <path d="M0 9h4v4H0zM16 9h4v4h-4zM0 27h4v4H0z" fill={B} />
          <path d="M10 31l6-9 4 2-6 7z" fill="#f0a93a" /><circle cx="18.500" cy="23" r="2" fill="#ec4b4b" />
          <path d="M11 34v8" stroke="#ccc" strokeWidth="2" />
          <path d="M17 1h16v6l-7 6v29h-2.500V13L17 7z" fill="#5f5f5f" />
        </svg>
      </button>
      <button aria-label="Timeline settings" className="ml-auto"><Gear className="text-[#999]" /></button>
    </footer>
  );
}

/* ---------- taskbar ---------- */

const apps: { name: string; tile?: string; bar: string; icon: ReactNode }[] = [
  {
    name: "Chrome", bar: "w-[51px] bg-[#00b7c3]",
    icon: <svg width="28" height="30" viewBox="0 0 28 28"><circle cx="14" cy="14" r="14" fill="#fdd04a" /><path d="M14 14 2 7A14 14 0 0 1 26 7z" fill="#dd4b3e" /><path d="M14 14 2 7a14 14 0 0 0 10 21l7-11z" fill="#1f9d57" /><circle cx="14" cy="14" r="6.500" fill="#fff" /><circle cx="14" cy="14" r="5" fill="#4285f4" /></svg>,
  },
  {
    name: "Sticky Notes", tile: "bg-[#f9ab76] border-r border-[#e58f55]", bar: "w-full bg-[#f97400]",
    icon: <svg width="27" height="27"><rect width="27" height="27" rx="1.500" fill="#3f3f3f" /><path d="M14 27V14h13z" fill="#ffd800" /><path d="M14 27l13-13v13z" fill="#2a2a2a" /></svg>,
  },
  {
    name: "File Explorer", bar: "w-[51px] bg-[#00b7c3]",
    icon: <svg width="28" height="25"><path d="M0 1q0-1 1-1h11l2 3H0z" fill="#e0a00f" /><path d="M0 3h28v21H0z" fill="#fed463" /><path d="M5 25V15q0-2 2-2h14q2 0 2 2v10h-4v-6h-10v6z" fill="#3a8ad0" /></svg>,
  },
  {
    name: "Movies & TV", bar: "w-[51px] bg-[#00b7c3]",
    icon: <svg width="30" height="30"><path d="M0 4 30 0v5L0 11z" fill="#22b4f2" /><path d="M4 3.500l6-1-4 6.500-6 1zM16 2l6-1-4 6-6 1z" fill="#0d63b8" /><rect y="8" width="30" height="22" rx="1" fill="#0f62b8" /><path d="M11 13l10 6-10 7z" fill="#fff" /></svg>,
  },
  {
    name: "Teams", bar: "w-[51px] bg-[#00b7c3]",
    icon: <svg width="31" height="32"><circle cx="16" cy="5" r="5" fill="#7b83eb" /><circle cx="25" cy="7" r="3" fill="#5059c9" /><path d="M12 11h11v11q-2 7-11 5z" fill="#7b83eb" /><path d="M22 12h7v10h-7z" fill="#5059c9" /><rect y="6" width="15" height="17" rx="1" fill="#4048a8" /><path d="M4 10h7M7.500 10v9" stroke="#fff" strokeWidth="2" /><circle cx="24" cy="25" r="6.500" fill="#6bb700" stroke="#fff" /><path d="M20.500 25l2.500 3 5-5.500" fill="none" stroke="#fff" strokeWidth="2" /></svg>,
  },
  { name: "Fusion 360", tile: "bg-[#f4edf3]", bar: "w-full bg-[#00b7c3]", icon: <FusionLogo size={29} label /> },
  {
    name: "Notepad", bar: "w-[51px] bg-[#00b7c3]",
    icon: <svg width="28" height="27"><path d="M17 3l9 1 2 20-6 3z" fill="#e9efe9" stroke="#89a" /><path d="M11 1l14 3-5 21L0 20z" fill="#5fb0bd" /><path d="M11 1l14 3-2 9L6 9z" fill="#a5d5dc" /><path d="M11 1l14 3" stroke="#567" strokeWidth="2" strokeDasharray="2 1" /></svg>,
  },
  {
    name: "Photos", bar: "w-[51px] bg-linear-to-r from-[#00b7c3] from-80% to-[#6fd3da] to-80%",
    icon: <svg width="28" height="28"><rect width="28" height="28" fill="#29aeea" /><path d="M0 19 9 10l5 6 4-4 10 9v7H0z" fill="#5d7fce" /><path d="M0 19l9-9 15 18H0z" fill="#124a8c" /><circle cx="18.500" cy="6.500" r="2.800" fill="#fff" /></svg>,
  },
];

function Taskbar() {
  return (
    <footer className={`flex h-[50px] shrink-0 items-stretch bg-linear-to-r from-[#e0d1e5] via-[#e6d3e4] to-[#e8d3d2] text-black ${windows}`}>
      <button aria-label="Start" className="grid w-[60px] place-items-center">
        <svg width="20" height="20"><path d="M0 3l8-1v7.500H0zM9 2l11-2v9.500H9zM0 10.500h8V18l-8-1zM9 10.500h11V20L9 18z" /></svg>
      </button>
      <label className="flex w-[430px] items-center gap-[14px] border border-[#c8c8c8] bg-white pl-[14px]">
        <svg aria-hidden width="21" height="21" fill="none" stroke="#111" strokeWidth="1.500"><circle cx="13.500" cy="7.500" r="6.500" /><path d="M9 12l-8 8" /></svg>
        <input aria-label="Type here to search" placeholder="Type here to search" className="w-80 text-[17px] outline-none placeholder:text-[#333]" />
      </label>
      <button aria-label="Cortana" className="grid w-[60px] place-items-center">
        <svg width="20" height="20"><circle cx="10" cy="10" r="8.300" fill="none" stroke="#000" strokeWidth="2.500" /></svg>
      </button>
      <button aria-label="Task View" className="grid w-[62px] place-items-center">
        <svg width="21" height="20" fill="none" stroke="#000"><path d="M.500 0v3.500h12V0M.500 5.500h12v9H.500zM.500 20v-3.500h12V20M18.500 0v4M18.500 10v9" /><path d="M17 6h3v3h-3z" fill="#000" /></svg>
      </button>
      <div className="ml-px flex gap-px">
        {apps.map((a) => (
          <button key={a.name} aria-label={a.name} className={`flex w-[61px] flex-col items-center ${a.tile ?? ""}`}>
            <span className="grid flex-1 place-items-center pt-1">{a.icon}</span>
            <span className={`h-[3px] ${a.bar}`} />
          </button>
        ))}
      </div>
      <div className="ml-auto flex items-center text-[13px]">
        <button aria-label="Hidden icons"><svg width="16" height="10" fill="none" stroke="#000" strokeWidth="1.200"><path d="M0 9l8-8 8 8" /></svg></button>
        <button aria-label="Volume" className="ml-3">
          <svg width="21" height="18" fill="none" stroke="#000"><path d="M.500 6.500H4l4-4v13l-4-4H.500zM11 7q1 2 0 4M14 4q3 5 0 10M17 1q5 8 0 16" /></svg>
        </button>
        <button aria-label="Battery" className="ml-[9px]">
          <svg width="21" height="14"><path d="M6 4h12v8H6z" fill="#000" stroke="#000" /><path d="M20 6v4M0 3h5v3H0zM1 0v3M4 0v3M2.500 6v5H5" stroke="#000" fill="none" /></svg>
        </button>
        <button aria-label="Network" className="ml-[9px]">
          <svg width="21" height="17" fill="none" stroke="#000"><path d="M5 1.500h15.500v11H3.500V6M.500.500h5v4h-5zM11.500 13v3M7 16.500h9" /></svg>
        </button>
        <button aria-label="Input language" className="ml-[15px]">ESP</button>
        <time className="ml-6 text-center leading-[23px]">12:34 PM<br />4/7/2021</time>
        <button aria-label="2 notifications" className="mr-[14px] ml-7">
          <svg width="32" height="32" viewBox="0 0 32 32"><path d="M1 2h20v17H9l-4 4v-4H1z" /><path d="M5 6.500h12M5 10.500h12M5 14.500h8" stroke="#e8d3d2" strokeWidth="1.200" /><circle cx="20.500" cy="21.500" r="10" fill="#cfc8c8" stroke="#777" /><text x="20.500" y="26" fontSize="13" textAnchor="middle">2</text></svg>
        </button>
        <span aria-hidden className="h-[50px] w-[6px] border-l border-[#b9a9a9]" />
      </div>
    </footer>
  );
}

export default function App() {
  return (
    <div className={`flex h-screen flex-col overflow-hidden bg-white ${sans}`}>
      <TitleBar />
      <div className="flex min-h-0 flex-1">
        <DataPanel />
        <main className="flex min-w-0 flex-1 flex-col">
          <TabBar />
          <Ribbon />
          <div className="relative min-h-0 flex-1 overflow-hidden bg-white">
            <Drawing />
            <Browser />
            <ViewCube />
            <Palette />
            <Comments />
            <NavBar />
          </div>
          <Timeline />
        </main>
      </div>
      <Taskbar />
    </div>
  );
}
